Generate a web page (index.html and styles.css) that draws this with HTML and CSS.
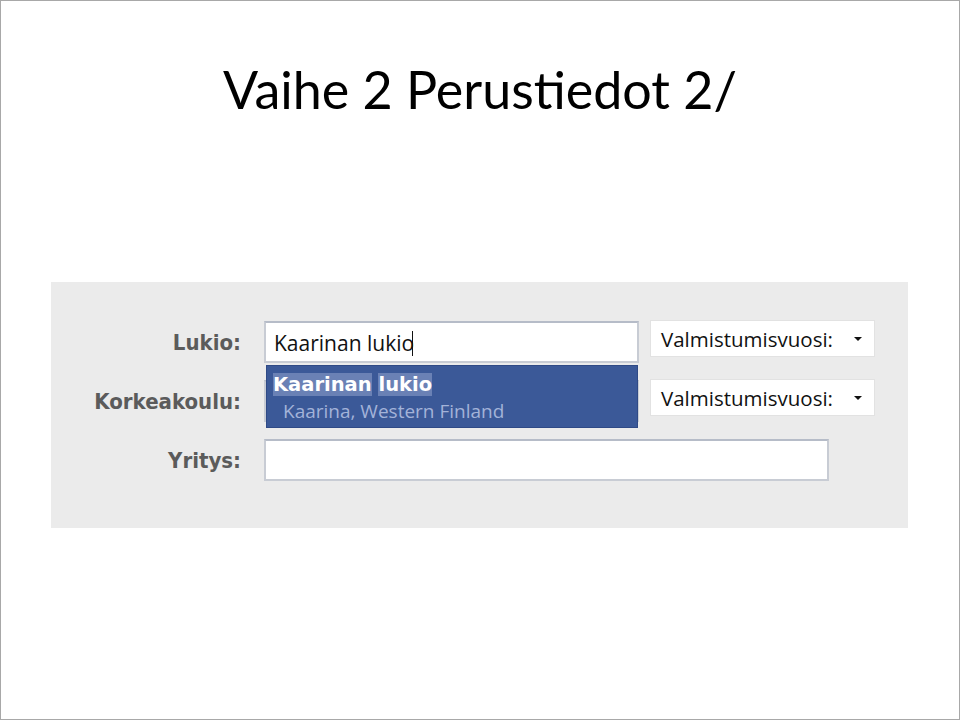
FILE: index.html
```html
<!DOCTYPE html>
<html lang="fi">

<head>
    <meta charset="UTF-8">
    <meta name="viewport" content="width=device-width, initial-scale=1.0">
    <title>Vaihe 2 Perustiedot</title>
    <link rel="stylesheet" href="styles.css">
</head>

<body>
    <div class="slide">
        <h1 class="title">Vaihe 2 Perustiedot 2/</h1>

        <div class="panel">
            <div class="form">
                <label class="label">Lukio:</label>
                <div class="field">
                    <div class="input">Kaarinan lukio<span class="caret"></span></div>
                    <!-- autocomplete list sits over the next row -->
                    <div class="suggest">
                        <div class="suggest-title"><span class="hit">Kaarinan</span> <span class="hit">lukio</span></div>
                        <div class="suggest-sub">Kaarina, Western Finland</div>
                    </div>
                </div>
                <div class="select">Valmistumisvuosi:<span class="arrow"></span></div>

                <label class="label">Korkeakoulu:</label>
                <div class="field">
                    <div class="input"></div>
                </div>
                <div class="select">Valmistumisvuosi:<span class="arrow"></span></div>

                <label class="label">Yritys:</label>
                <div class="field wide">
                    <div class="input"></div>
                </div>
            </div>
        </div>
    </div>
</body>

</html>
```

FILE: styles.css
```css
body {
    margin: 0;
    background-color: white;
}

.slide {
    width: 960px;
    height: 720px;
    box-sizing: border-box;
    border: 1px solid #a8a8a8;
    padding-top: 62px;
}

.title {
    margin: 0;
    font-family: Lato, "Open Sans", sans-serif;
    font-weight: normal;
    font-size: 52px;
    line-height: 1;
    text-align: center;
    color: black;
}

.panel {
    margin: 167px 0 0 50px;
    width: 857px;
    padding: 39px 0 47px 0;
    background-color: #ebebeb;
}

.form {
    display: grid;
    grid-template-columns: 213px 386px 225px;
    grid-auto-rows: 42px;
    row-gap: 17px;
}

.label {
    align-self: center;
    padding-right: 23px;
    text-align: right;
    font-family: "DejaVu Sans Condensed", "DejaVu Sans", sans-serif;
    font-weight: bold;
    font-size: 22px;
    color: #5b5b5b;
}

.field {
    position: relative;
}

.field.wide {
    grid-column: 2 / 4;
}

.input {
    width: 375px;
    height: 42px;
    box-sizing: border-box;
    border: 2px solid #c8ccd4;
    border-top-color: #b6bcc8;
    background-color: white;
    padding: 4px 8px 0;
    font-family: "Open Sans", sans-serif;
    font-size: 21px;
    line-height: 32px;
    color: #111;
}

.field.wide .input {
    width: 565px;
}

.caret {
    display: inline-block;
    width: 1px;
    height: 25px;
    margin-left: -2px;
    vertical-align: -5px;
    background-color: #111;
}

.suggest {
    position: absolute;
    z-index: 1;
    top: 44px;
    left: 2px;
    width: 372px;
    height: 63px;
    box-sizing: border-box;
    padding: 6px 6px;
    background-color: #3b5998;
    border: 1px solid #2f4a86;
}

.suggest-title {
    font-family: "DejaVu Sans", sans-serif;
    font-weight: bold;
    font-size: 19.5px;
    line-height: 26px;
    color: white;
}

.hit {
    background-color: #6a81b5;
}

.suggest-sub {
    padding-left: 10px;
    font-family: "Open Sans", sans-serif;
    font-size: 19px;
    line-height: 26px;
    color: #a3b3d8;
}

.select {
    align-self: start;
    margin-top: -1px;
    height: 37px;
    box-sizing: border-box;
    padding: 0 10px;
    display: flex;
    align-items: center;
    justify-content: space-between;
    background-color: white;
    border: 1px solid #e2e2e2;
    font-family: "Open Sans", sans-serif;
    font-size: 20.5px;
    color: #111;
}

.arrow {
    width: 0;
    height: 0;
    margin-right: 2px;
    border-left: 4px solid transparent;
    border-right: 4px solid transparent;
    border-top: 4px solid #111;
}
```
